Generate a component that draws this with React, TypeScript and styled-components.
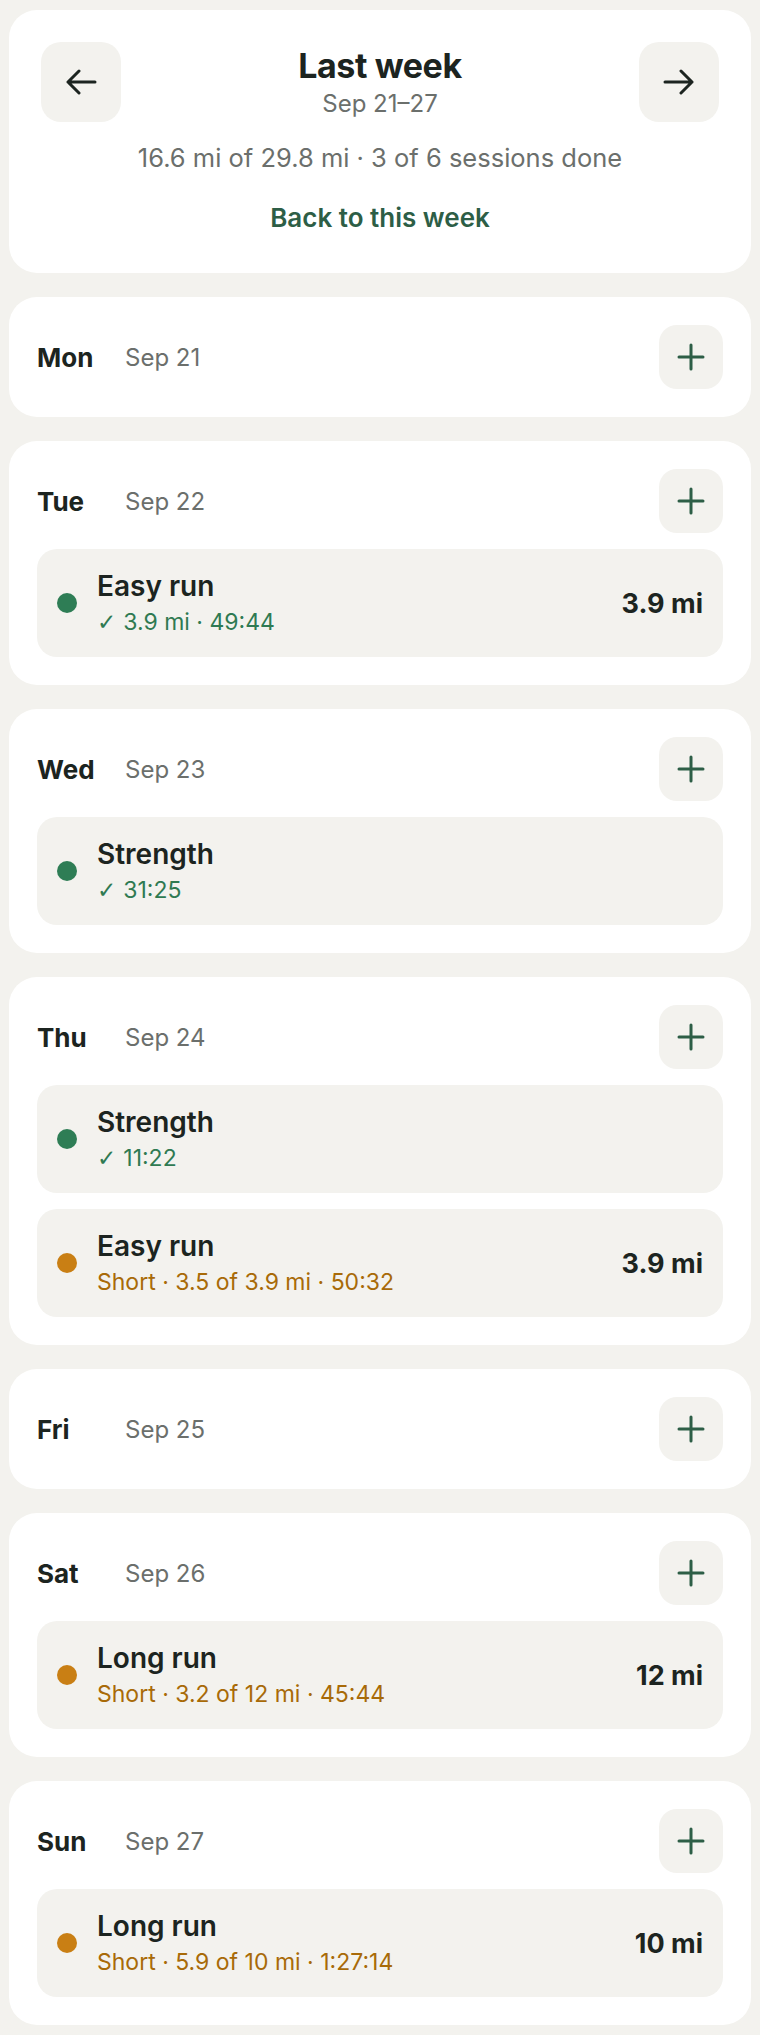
import React from "react";
import styled, { createGlobalStyle } from "styled-components";

const GlobalStyle = createGlobalStyle`
  html, body {
    margin: 0;
    padding: 0;
    background: #f3f2ee;
    font-family: Inter, "Noto Sans", sans-serif;
    color: #1c2420;
  }
  * { box-sizing: border-box; }
`;

const Page = styled.div`
  display: flex;
  flex-direction: column;
  gap: 24px;
  padding: 10px 9px;
`;

const Card = styled.section`
  background: #ffffff;
  border-radius: 28px;
`;

const HeaderCard = styled(Card)`
  padding: 32px 32px 26px;
  display: flex;
  flex-direction: column;
  align-items: center;
`;

const HeaderRow = styled.div`
  width: 100%;
  height: 80px;
  display: flex;
  align-items: center;
  justify-content: space-between;
`;

const NavButton = styled.button`
  width: 80px;
  height: 80px;
  border: none;
  border-radius: 20px;
  background: #f3f2ee;
  display: flex;
  align-items: center;
  justify-content: center;
  color: #1c2420;
  padding: 0;
`;

const TitleBlock = styled.div`
  display: flex;
  flex-direction: column;
  align-items: center;
  gap: 4px;
`;

const Title = styled.h1`
  margin: 0;
  font-size: 34px;
  line-height: 40px;
  font-weight: 700;
  letter-spacing: -0.4px;
`;

const Range = styled.div`
  font-size: 24px;
  line-height: 28px;
  color: #6b6f6c;
`;

const Stats = styled.div`
  margin-top: 21px;
  font-size: 25.5px;
  line-height: 30px;
  color: #6b6f6c;
`;

const BackLink = styled.button`
  margin-top: 16px;
  padding: 14px 20px;
  border: none;
  background: none;
  font-family: inherit;
  font-size: 26px;
  line-height: 30px;
  font-weight: 600;
  color: #2d5e46;
`;

const DayCard = styled(Card)`
  padding: 28px;
  display: flex;
  flex-direction: column;
  gap: 16px;
`;

const DayHead = styled.div`
  display: flex;
  align-items: center;
  height: 64px;
`;

const DayName = styled.div`
  width: 88px;
  font-size: 26px;
  font-weight: 700;
`;

const DayDate = styled.div`
  flex: 1;
  font-size: 24px;
  color: #6b6f6c;
`;

const AddButton = styled.button`
  width: 64px;
  height: 64px;
  border: none;
  border-radius: 18px;
  background: #f3f2ee;
  display: flex;
  align-items: center;
  justify-content: center;
  padding: 0;
  color: #2d5e46;
`;

const Session = styled.div`
  background: #f3f2ee;
  border-radius: 20px;
  padding: 20px;
  min-height: 108px;
  display: flex;
  align-items: center;
  gap: 20px;
`;

const Dot = styled.span<{ $tone: Tone }>`
  width: 20px;
  height: 20px;
  border-radius: 50%;
  flex-shrink: 0;
  background: ${(p) => (p.$tone === "done" ? "#2e7d55" : "#c97f14")};
`;

const SessionText = styled.div`
  flex: 1;
  display: flex;
  flex-direction: column;
  gap: 4px;
`;

const SessionTitle = styled.div`
  font-size: 28px;
  line-height: 34px;
  font-weight: 600;
`;

const SessionMeta = styled.div<{ $tone: Tone }>`
  font-size: 23px;
  line-height: 30px;
  color: ${(p) => (p.$tone === "done" ? "#2f7a52" : "#a86a08")};
`;

const Check = styled.span`
  font-family: "DejaVu Sans", sans-serif;
  font-size: 23px;
  margin-right: 7px;
`;

const Distance = styled.div`
  font-size: 27px;
  font-weight: 700;
`;

type Tone = "done" | "short";

type SessionItem = {
  title: string;
  meta: string;
  tone: Tone;
  distance?: string;
};

type Day = {
  name: string;
  date: string;
  sessions: SessionItem[];
};

const days: Day[] = [
  { name: "Mon", date: "Sep 21", sessions: [] },
  {
    name: "Tue",
    date: "Sep 22",
    sessions: [{ title: "Easy run", meta: "3.9 mi · 49:44", tone: "done", distance: "3.9 mi" }],
  },
  {
    name: "Wed",
    date: "Sep 23",
    sessions: [{ title: "Strength", meta: "31:25", tone: "done" }],
  },
  {
    name: "Thu",
    date: "Sep 24",
    sessions: [
      { title: "Strength", meta: "11:22", tone: "done" },
      { title: "Easy run", meta: "Short · 3.5 of 3.9 mi · 50:32", tone: "short", distance: "3.9 mi" },
    ],
  },
  { name: "Fri", date: "Sep 25", sessions: [] },
  {
    name: "Sat",
    date: "Sep 26",
    sessions: [{ title: "Long run", meta: "Short · 3.2 of 12 mi · 45:44", tone: "short", distance: "12 mi" }],
  },
  {
    name: "Sun",
    date: "Sep 27",
    sessions: [{ title: "Long run", meta: "Short · 5.9 of 10 mi · 1:27:14", tone: "short", distance: "10 mi" }],
  },
];

function Arrow({ dir }: { dir: "left" | "right" }) {
  return (
    <svg
      width="32"
      height="26"
      viewBox="0 0 32 26"
      fill="none"
      stroke="currentColor"
      strokeWidth="3"
      strokeLinecap="round"
      strokeLinejoin="round"
      style={dir === "right" ? { transform: "scaleX(-1)" } : undefined}
    >
      <path d="M30 13H3M14 2L3 13l11 11" />
    </svg>
  );
}

function Plus() {
  return (
    <svg width="28" height="28" viewBox="0 0 28 28" fill="none" stroke="currentColor" strokeWidth="3" strokeLinecap="round">
      <path d="M14 2v24M2 14h24" />
    </svg>
  );
}

function DayBlock({ day }: { day: Day }) {
  return (
    <DayCard>
      <DayHead>
        <DayName>{day.name}</DayName>
        <DayDate>{day.date}</DayDate>
        <AddButton aria-label="Add session">
          <Plus />
        </AddButton>
      </DayHead>
      {day.sessions.map((s, i) => (
        <Session key={i}>
          <Dot $tone={s.tone} />
          <SessionText>
            <SessionTitle>{s.title}</SessionTitle>
            <SessionMeta $tone={s.tone}>
              {s.tone === "done" && <Check>✓</Check>}
              {s.meta}
            </SessionMeta>
          </SessionText>
          {s.distance && <Distance>{s.distance}</Distance>}
        </Session>
      ))}
    </DayCard>
  );
}

export default function App() {
  return (
    <>
      <GlobalStyle />
      <Page>
        <HeaderCard>
          <HeaderRow>
            <NavButton aria-label="Previous week">
              <Arrow dir="left" />
            </NavButton>
            <TitleBlock>
              <Title>Last week</Title>
              <Range>Sep 21–27</Range>
            </TitleBlock>
            <NavButton aria-label="Next week">
              <Arrow dir="right" />
            </NavButton>
          </HeaderRow>
          <Stats>16.6 mi of 29.8 mi · 3 of 6 sessions done</Stats>
          <BackLink>Back to this week</BackLink>
        </HeaderCard>
        {days.map((d) => (
          <DayBlock key={d.name} day={d} />
        ))}
      </Page>
    </>
  );
}
